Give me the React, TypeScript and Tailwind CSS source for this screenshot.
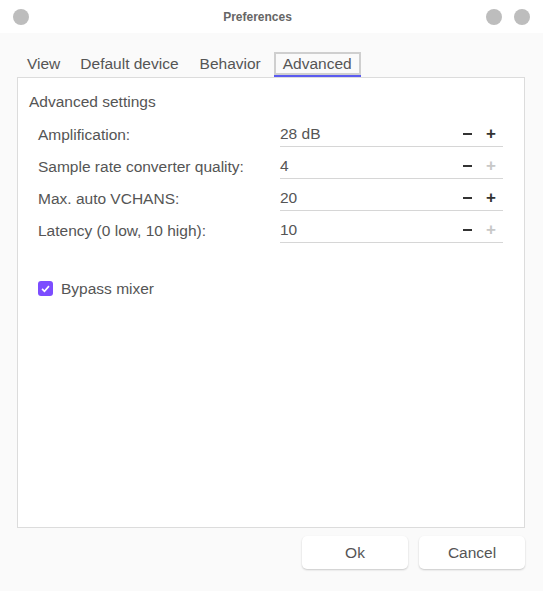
import React from 'react';

const rows = [
  { label: 'Amplification:', value: '28 dB', plus: true },
  { label: 'Sample rate converter quality:', value: '4', plus: false },
  { label: 'Max. auto VCHANS:', value: '20', plus: true },
  { label: 'Latency (0 low, 10 high):', value: '10', plus: false },
];

function Dot() {
  return <div className="w-4 h-4 rounded-full bg-[#bdbdbd]" />;
}

export default function App() {
  return (
    <div
      className="w-[543px] h-[591px] bg-white flex flex-col text-[#555]"
      style={{ fontFamily: '"Liberation Sans", Arial, sans-serif' }}
    >
      <div className="h-[33px] flex items-center px-[13px] bg-white">
        <Dot />
        <div className="flex-1 text-center text-[12px] font-bold text-[#666]">Preferences</div>
        <div className="flex gap-3">
          <Dot />
          <Dot />
        </div>
      </div>
      <div className="flex-1 bg-[#fafafa] pl-[17px] pr-[18px] pt-[19px] flex flex-col">
        <div className="flex items-end h-[25px] pl-[10px] text-[15.5px] leading-none">
          <div className="pb-[6px] mr-[20px]">View</div>
          <div className="pb-[6px] mr-[21px]">Default device</div>
          <div className="pb-[6px] mr-[13px]">Behavior</div>
          <div className="border-b-2 border-[#5b5bf0] h-[25px] flex">
            <div className="border-2 border-[#cfcfcf] px-[7px] flex items-center h-[23px]">Advanced</div>
          </div>
        </div>
        <div className="h-[451px] bg-white border border-[#dcdcdc] px-[11px] pt-[12px]">
          <div className="text-[15.5px]">Advanced settings</div>
          <div className="pl-[9px] pr-[10px] mt-[8px]">
            {rows.map((r) => (
              <div key={r.label} className="flex items-center h-[26px] mb-[6px] text-[15.5px]">
                <div className="w-[242px]">{r.label}</div>
                <div className="flex-1 flex items-center h-[26px] border-b border-[#d6d6d6]">
                  <span className="flex-1">{r.value}</span>
                  <span className="w-[24px] flex justify-center">
                    <span className="w-[9px] h-[2px] bg-[#333]" />
                  </span>
                  <span className={`w-[24px] text-[17px] text-center font-bold ${r.plus ? 'text-[#333]' : 'text-[#c8c8c8]'}`}>+</span>
                </div>
              </div>
            ))}
            <div className="flex items-center mt-[34px] text-[15.5px]">
              <div className="w-[15px] h-[15px] rounded-[3px] bg-[#7c4dff] flex items-center justify-center mr-[8px]">
                <svg viewBox="0 0 16 16" className="w-[11px] h-[11px]">
                  <path d="M3 8.5 L6.5 12 L13 4.5" stroke="white" strokeWidth="2.4" fill="none" />
                </svg>
              </div>
              Bypass mixer
            </div>
          </div>
        </div>
        <div className="flex justify-end gap-[11px] mt-[8px]">
          <button className="w-[106px] h-[33px] bg-white rounded-[5px] shadow-[0_1px_2px_rgba(0,0,0,0.2)] text-[15.5px] text-[#555]">Ok</button>
          <button className="w-[106px] h-[33px] bg-white rounded-[5px] shadow-[0_1px_2px_rgba(0,0,0,0.2)] text-[15.5px] text-[#555]">Cancel</button>
        </div>
      </div>
    </div>
  );
}
